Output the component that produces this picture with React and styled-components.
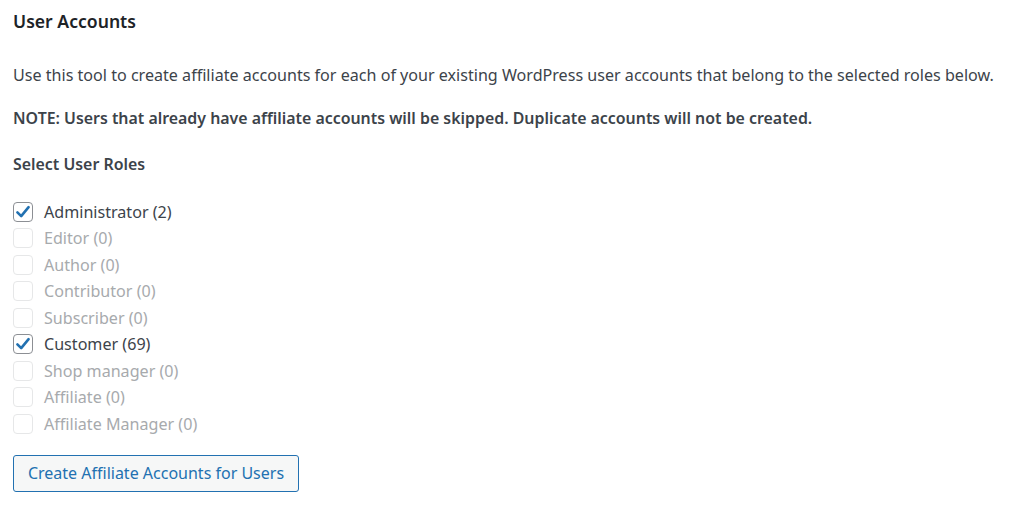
import React from "react";
import styled, { createGlobalStyle } from "styled-components";

const GlobalStyle = createGlobalStyle`
  html, body {
    margin: 0;
    padding: 0;
    background: #ffffff;
  }
  body {
    font-family: "Noto Sans", "Open Sans", sans-serif;
    color: #3c434a;
  }
`;

const ROLES = [
  { name: "Administrator", count: 2, checked: true },
  { name: "Editor", count: 0 },
  { name: "Author", count: 0 },
  { name: "Contributor", count: 0 },
  { name: "Subscriber", count: 0 },
  { name: "Customer", count: 69, checked: true },
  { name: "Shop manager", count: 0 },
  { name: "Affiliate", count: 0 },
  { name: "Affiliate Manager", count: 0 },
];

const Page = () => (
  <>
    <GlobalStyle />
    <Wrap>
      <Title>User Accounts</Title>
      <Intro>
        Use this tool to create affiliate accounts for each of your existing
        WordPress user accounts that belong to the selected roles below.
      </Intro>
      <Note>
        NOTE: Users that already have affiliate accounts will be skipped.
        Duplicate accounts will not be created.
      </Note>
      <Subtitle>Select User Roles</Subtitle>
      <RoleList>
        {ROLES.map((r) => (
          <Role key={r.name} $enabled={r.count > 0}>
            <Box $enabled={r.count > 0}>
              {r.checked && (
                <svg width="18" height="18" viewBox="0 0 18 18">
                  <path
                    d="M3.4 9.4 L7.2 13.2 L14.6 4.2"
                    fill="none"
                    stroke="#2271b1"
                    strokeWidth="2.6"
                    strokeLinecap="round"
                    strokeLinejoin="round"
                  />
                </svg>
              )}
            </Box>
            <span>
              {r.name} ({r.count})
            </span>
          </Role>
        ))}
      </RoleList>
      <Button type="button">Create Affiliate Accounts for Users</Button>
    </Wrap>
  </>
);

const Wrap = styled.div`
  padding: 10px 13px;
  font-size: 16.1px;
  line-height: 24px;
`;

const Title = styled.h2`
  margin: 0 0 30px;
  font-size: 17.6px;
  font-weight: 600;
  color: #1d2327;
  line-height: 22.6px;
`;

const Intro = styled.p`
  margin: 0 0 19.4px;
  white-space: nowrap;
`;

const Note = styled.p`
  margin: 0 0 22px;
  font-size: 15.9px;
  font-weight: 600;
  white-space: nowrap;
`;

const Subtitle = styled.div`
  font-weight: 600;
  font-size: 15.9px;
  margin-bottom: 22.7px;
`;

const RoleList = styled.div`
  display: flex;
  flex-direction: column;
`;

const Role = styled.label`
  display: flex;
  align-items: center;
  gap: 11px;
  height: 26.5px;
  color: ${(p) => (p.$enabled ? "#3c434a" : "#a7aaad")};
`;

const Box = styled.span`
  width: 20px;
  height: 20px;
  box-sizing: border-box;
  border-radius: 4px;
  border: 1px solid ${(p) => (p.$enabled ? "#8c8f94" : "#e6e7e8")};
  background: #ffffff;
  display: flex;
  align-items: center;
  justify-content: center;
  flex-shrink: 0;
`;

const Button = styled.button`
  margin-top: 17.7px;
  width: 286px;
  height: 37px;
  border: 1px solid #2271b1;
  border-radius: 3px;
  background: #f6f7f7;
  color: #2271b1;
  font-family: inherit;
  font-size: 16px;
  padding: 0 12px;
  cursor: pointer;
  display: block;
`;

export default function App() {
  return <Page />;
}
